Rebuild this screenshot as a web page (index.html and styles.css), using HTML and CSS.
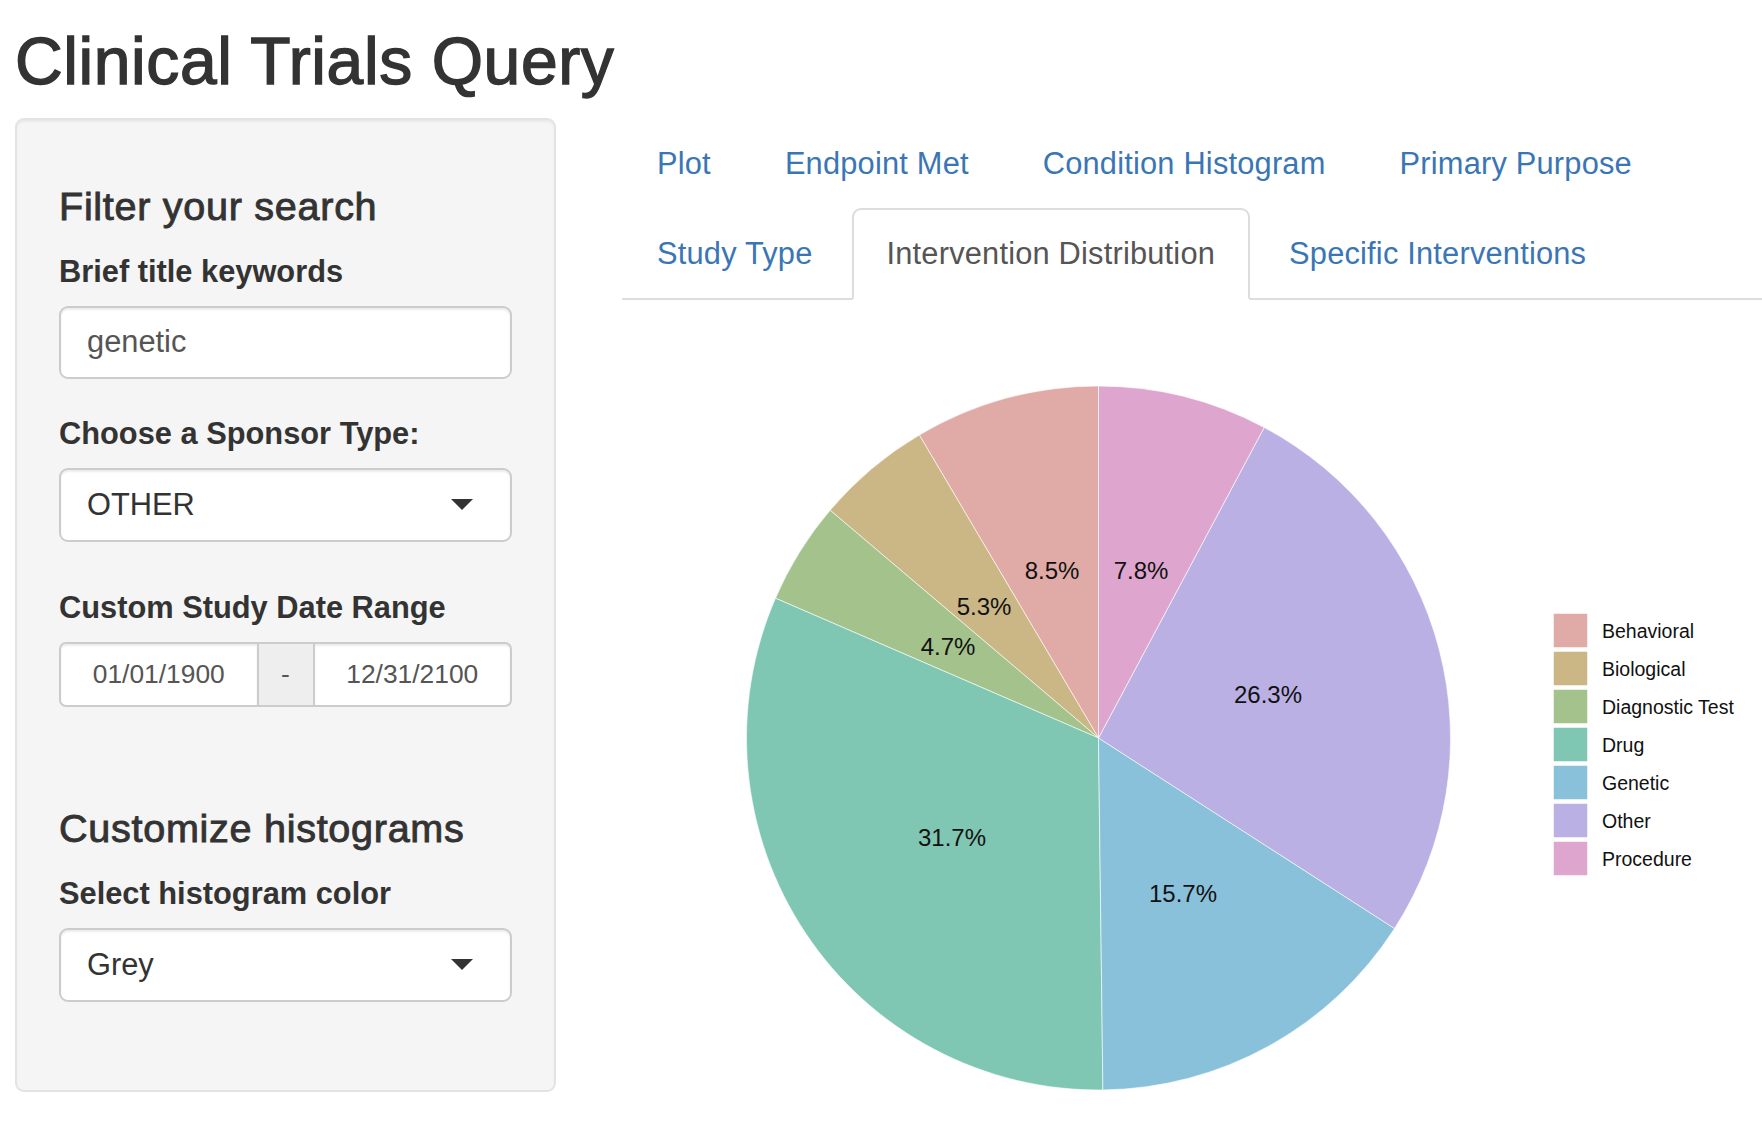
FILE: index.html
```html
<!DOCTYPE html>
<html lang="en">
<head>
<meta charset="utf-8">
<title>Clinical Trials Query</title>
<link rel="stylesheet" href="styles.css">
</head>
<body>
<div class="page">
  <h2 class="title">Clinical Trials Query</h2>
  <div class="layout">
    <aside class="well">
      <h4 class="well-heading">Filter your search</h4>
      <div class="form-group">
        <label class="control-label">Brief title keywords</label>
        <div class="form-control text-input">genetic</div>
      </div>
      <div class="form-group fg-sponsor">
        <label class="control-label">Choose a Sponsor Type:</label>
        <div class="form-control select-input"><span>OTHER</span><span class="caret"></span></div>
      </div>
      <div class="form-group fg-date">
        <label class="control-label">Custom Study Date Range</label>
        <div class="daterange">
          <div class="date-input">01/01/1900</div>
          <div class="date-addon">-</div>
          <div class="date-input">12/31/2100</div>
        </div>
      </div>
      <h4 class="well-heading">Customize histograms</h4>
      <div class="form-group">
        <label class="control-label">Select histogram color</label>
        <div class="form-control select-input"><span>Grey</span><span class="caret"></span></div>
      </div>
    </aside>
    <main class="main">
      <ul class="nav-tabs">
        <li><a href="#">Plot</a></li>
        <li><a href="#">Endpoint Met</a></li>
        <li><a href="#">Condition Histogram</a></li>
        <li><a href="#">Primary Purpose</a></li>
        <li><a href="#">Study Type</a></li>
        <li class="active"><a href="#">Intervention Distribution</a></li>
        <li><a href="#">Specific Interventions</a></li>
      </ul>
      <div class="tab-content">
        <svg class="pie-chart" width="1140" height="840" viewBox="0 0 1140 840" xmlns="http://www.w3.org/2000/svg">
          <g class="slices" stroke="#ffffff" stroke-width="0.6">
            <path d="M476.5 438 L476.5 86 A352 352 0 0 0 297.32 135.02 Z" fill="#e0aba7"/>
            <path d="M476.5 438 L297.32 135.02 A352 352 0 0 0 208.12 210.23 Z" fill="#cbb786"/>
            <path d="M476.5 438 L208.12 210.23 A352 352 0 0 0 153.45 298.2 Z" fill="#a3c28c"/>
            <path d="M476.5 438 L153.45 298.2 A352 352 0 0 0 480.92 789.97 Z" fill="#80c7b3"/>
            <path d="M476.5 438 L480.92 789.97 A352 352 0 0 0 772.52 628.47 Z" fill="#89c0da"/>
            <path d="M476.5 438 L772.52 628.47 A352 352 0 0 0 642.21 127.44 Z" fill="#bab0e4"/>
            <path d="M476.5 438 L642.21 127.44 A352 352 0 0 0 476.5 86 Z" fill="#dea6ce"/>
          </g>
          <g class="pct" font-size="24" text-anchor="middle" dominant-baseline="central" fill="#111">
            <text x="430" y="270">8.5%</text>
            <text x="519" y="270">7.8%</text>
            <text x="362" y="306">5.3%</text>
            <text x="326" y="346">4.7%</text>
            <text x="646" y="394">26.3%</text>
            <text x="330" y="537">31.7%</text>
            <text x="561" y="593">15.7%</text>
          </g>
          <g class="legend" font-size="19.5" fill="#111">
            <rect x="931" y="313" width="35" height="35" fill="#e0aba7" stroke="#fff" stroke-width="1.5"/>
            <text x="980" y="338">Behavioral</text>
            <rect x="931" y="351" width="35" height="35" fill="#cbb786" stroke="#fff" stroke-width="1.5"/>
            <text x="980" y="376">Biological</text>
            <rect x="931" y="389" width="35" height="35" fill="#a3c28c" stroke="#fff" stroke-width="1.5"/>
            <text x="980" y="414">Diagnostic Test</text>
            <rect x="931" y="427" width="35" height="35" fill="#80c7b3" stroke="#fff" stroke-width="1.5"/>
            <text x="980" y="452">Drug</text>
            <rect x="931" y="465" width="35" height="35" fill="#89c0da" stroke="#fff" stroke-width="1.5"/>
            <text x="980" y="490">Genetic</text>
            <rect x="931" y="503" width="35" height="35" fill="#bab0e4" stroke="#fff" stroke-width="1.5"/>
            <text x="980" y="528">Other</text>
            <rect x="931" y="541" width="35" height="35" fill="#dea6ce" stroke="#fff" stroke-width="1.5"/>
            <text x="980" y="566">Procedure</text>
          </g>
        </svg>
      </div>
    </main>
  </div>
</div>
</body>
</html>
```

FILE: styles.css
```css
html, body {
  margin: 0;
  padding: 0;
  background: #ffffff;
  overflow: hidden;
}

body {
  font-family: "Liberation Sans", Arial, Helvetica, sans-serif;
  font-size: 30.8px;
  line-height: 44px;
  color: #333333;
}

.page {
  padding-left: 15px;
}

.title {
  margin: 25px 0 20px;
  font-size: 66px;
  line-height: 72.6px;
  font-weight: 500;
  letter-spacing: 0.6px;
  color: #333333;
  -webkit-text-stroke: 1.4px #333333;
}

.layout {
  display: flex;
  align-items: flex-start;
}

/* Sidebar well */
.well {
  box-sizing: border-box;
  flex: 0 0 541px;
  width: 541px;
  padding: 42px 42px 55px;
  background: #f5f5f5;
  border: 2px solid #e3e3e3;
  border-radius: 9px;
  box-shadow: inset 0 2px 2px rgba(0, 0, 0, 0.05);
}

.well-heading {
  margin: 22px 0;
  font-size: 39.6px;
  line-height: 44px;
  font-weight: 500;
  letter-spacing: 0.7px;
  color: #333333;
  -webkit-text-stroke: 0.9px #333333;
}

.form-group {
  margin-bottom: 33px;
}

.fg-sponsor {
  margin-bottom: 44px;
}

.fg-date {
  margin-bottom: 99px;
}

.control-label {
  display: block;
  margin-bottom: 12px;
  font-weight: 700;
  line-height: 44px;
}

.form-control {
  box-sizing: border-box;
  width: 100%;
  background: #ffffff;
  border: 2px solid #cccccc;
  border-radius: 9px;
  box-shadow: inset 0 2px 2px rgba(0, 0, 0, 0.075);
  padding: 0 26px;
  display: flex;
  align-items: center;
}

.text-input {
  height: 73px;
  color: #555555;
}

.select-input {
  height: 74px;
  color: #333333;
  justify-content: space-between;
}

.caret {
  width: 0;
  height: 0;
  margin-right: 11px;
  border-left: 11px solid transparent;
  border-right: 11px solid transparent;
  border-top: 11px solid #333333;
}

/* Date range */
.daterange {
  display: flex;
  height: 65px;
}

.date-input {
  box-sizing: border-box;
  flex: 1 1 0;
  height: 65px;
  display: flex;
  align-items: center;
  justify-content: center;
  background: #ffffff;
  border: 2px solid #cccccc;
  font-size: 26.4px;
  color: #555555;
  box-shadow: inset 0 2px 2px rgba(0, 0, 0, 0.075);
}

.date-input:first-child {
  border-radius: 7px 0 0 7px;
}

.date-input:last-child {
  border-radius: 0 7px 7px 0;
}

.date-addon {
  box-sizing: border-box;
  flex: 0 0 54px;
  height: 65px;
  display: flex;
  align-items: center;
  justify-content: center;
  background: #eeeeee;
  border-top: 2px solid #cccccc;
  border-bottom: 2px solid #cccccc;
  font-size: 26.4px;
  color: #555555;
}

/* Main panel */
.main {
  flex: 1 1 auto;
  margin-left: 66px;
  min-width: 0;
}

.nav-tabs {
  list-style: none;
  margin: 0;
  padding: 0;
  display: flex;
  flex-wrap: wrap;
  border-bottom: 2px solid #dddddd;
}

.nav-tabs li {
  margin-bottom: -2px;
}

.nav-tabs a {
  display: block;
  margin-right: 4px;
  padding: 22px 33px;
  line-height: 44px;
  letter-spacing: 0.2px;
  border: 2px solid transparent;
  border-radius: 9px 9px 0 0;
  color: #3a76b5;
  text-decoration: none;
}

.nav-tabs li.active a {
  color: #555555;
  background: #ffffff;
  border-color: #dddddd;
  border-bottom-color: transparent;
}

.tab-content {
  height: 846px;
}

.pie-chart {
  display: block;
  font-family: "Liberation Sans", Arial, Helvetica, sans-serif;
}
```
